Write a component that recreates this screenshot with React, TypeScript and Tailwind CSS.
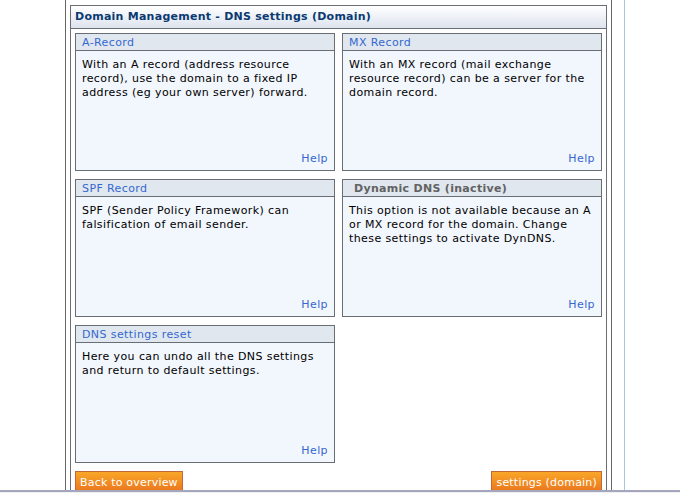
import type { ReactNode } from "react";

type BoxProps = {
  title: string;
  inactive?: boolean;
  children: ReactNode;
};

function Box({ title, inactive, children }: BoxProps) {
  return (
    <div className="flex h-[138px] flex-col border border-[#686e73] bg-[#f2f6fd]">
      <div
        className={
          inactive
            ? "h-[17px] border-b border-[#686e73] bg-[#e0e7ee] pl-[11px] text-[11px] leading-[17px] font-bold tracking-[0.3px] text-[#626262]"
            : "h-[17px] border-b border-[#686e73] bg-[#e0e7ee] pl-[6px] text-[11px] leading-[17px] tracking-[0.4px] text-[#3467d0]"
        }
      >
        {title}
      </div>
      <div className="flex-1 px-[6px] pt-[7px] text-[11px] leading-[14px] tracking-[0.4px] text-black">{children}</div>
      <div className="px-[6px] pb-[4px] text-right text-[11px] leading-[14px] tracking-[0.4px] text-[#3467d0]">Help</div>
    </div>
  );
}

function OrangeButton({ label }: { label: string }) {
  return (
    <button className="h-[24px] border border-[#c0693c] bg-gradient-to-b from-[#f9a628] to-[#e8701d] px-[4px] text-[11px] leading-[20px] tracking-[0.2px] text-white">
      {label}
    </button>
  );
}

export default function App() {
  return (
    <div className="flex h-[493px] w-[680px] flex-col overflow-hidden bg-white" style={{ fontFamily: '"DejaVu Sans", Verdana, sans-serif' }}>
      <div className="flex flex-1 overflow-hidden">
        <div className="w-[65px] shrink-0" />

        {/* content column */}
        <div className="w-[547px] shrink-0 border-x border-[#666666] px-[4px] pt-[5px]">
          <div className="border border-[#6a6f73]">
            <div className="h-[23px] border-b border-[#6a6f73] bg-gradient-to-b from-white to-[#dde3ee] pl-[4px] text-[11px] leading-[22px] font-bold tracking-[0.25px] text-[#0b3a72]">
              Domain Management - DNS settings (Domain)
            </div>
            <div className="p-[4px]">
              <div className="grid grid-cols-2 gap-x-[7px] gap-y-[8px]">
                <Box title="A-Record">
                  With an A record (address resource record), use the domain to a fixed IP address (eg your own server) forward.
                </Box>
                <Box title="MX Record">
                  With an MX record (mail exchange resource record) can be a server for the domain record.
                </Box>
                <Box title="SPF Record">SPF (Sender Policy Framework) can falsification of email sender.</Box>
                <Box title="Dynamic DNS (inactive)" inactive>
                  This option is not available because an A or MX record for the domain. Change these settings to activate DynDNS.
                </Box>
                <Box title="DNS settings reset">
                  Here you can undo all the DNS settings and return to default settings.
                </Box>
              </div>
              <div className="flex justify-between pt-[8px]">
                <OrangeButton label="Back to overview" />
                <OrangeButton label="settings (domain)" />
              </div>
            </div>
          </div>
        </div>

        <div className="ml-[12px] w-px shrink-0 bg-[#a9c6e0]" />
      </div>
      <div className="h-[2px] shrink-0 bg-[#a3a6bd]" />
      <div className="h-px shrink-0 bg-[#f0f0f4]" />
    </div>
  );
}
